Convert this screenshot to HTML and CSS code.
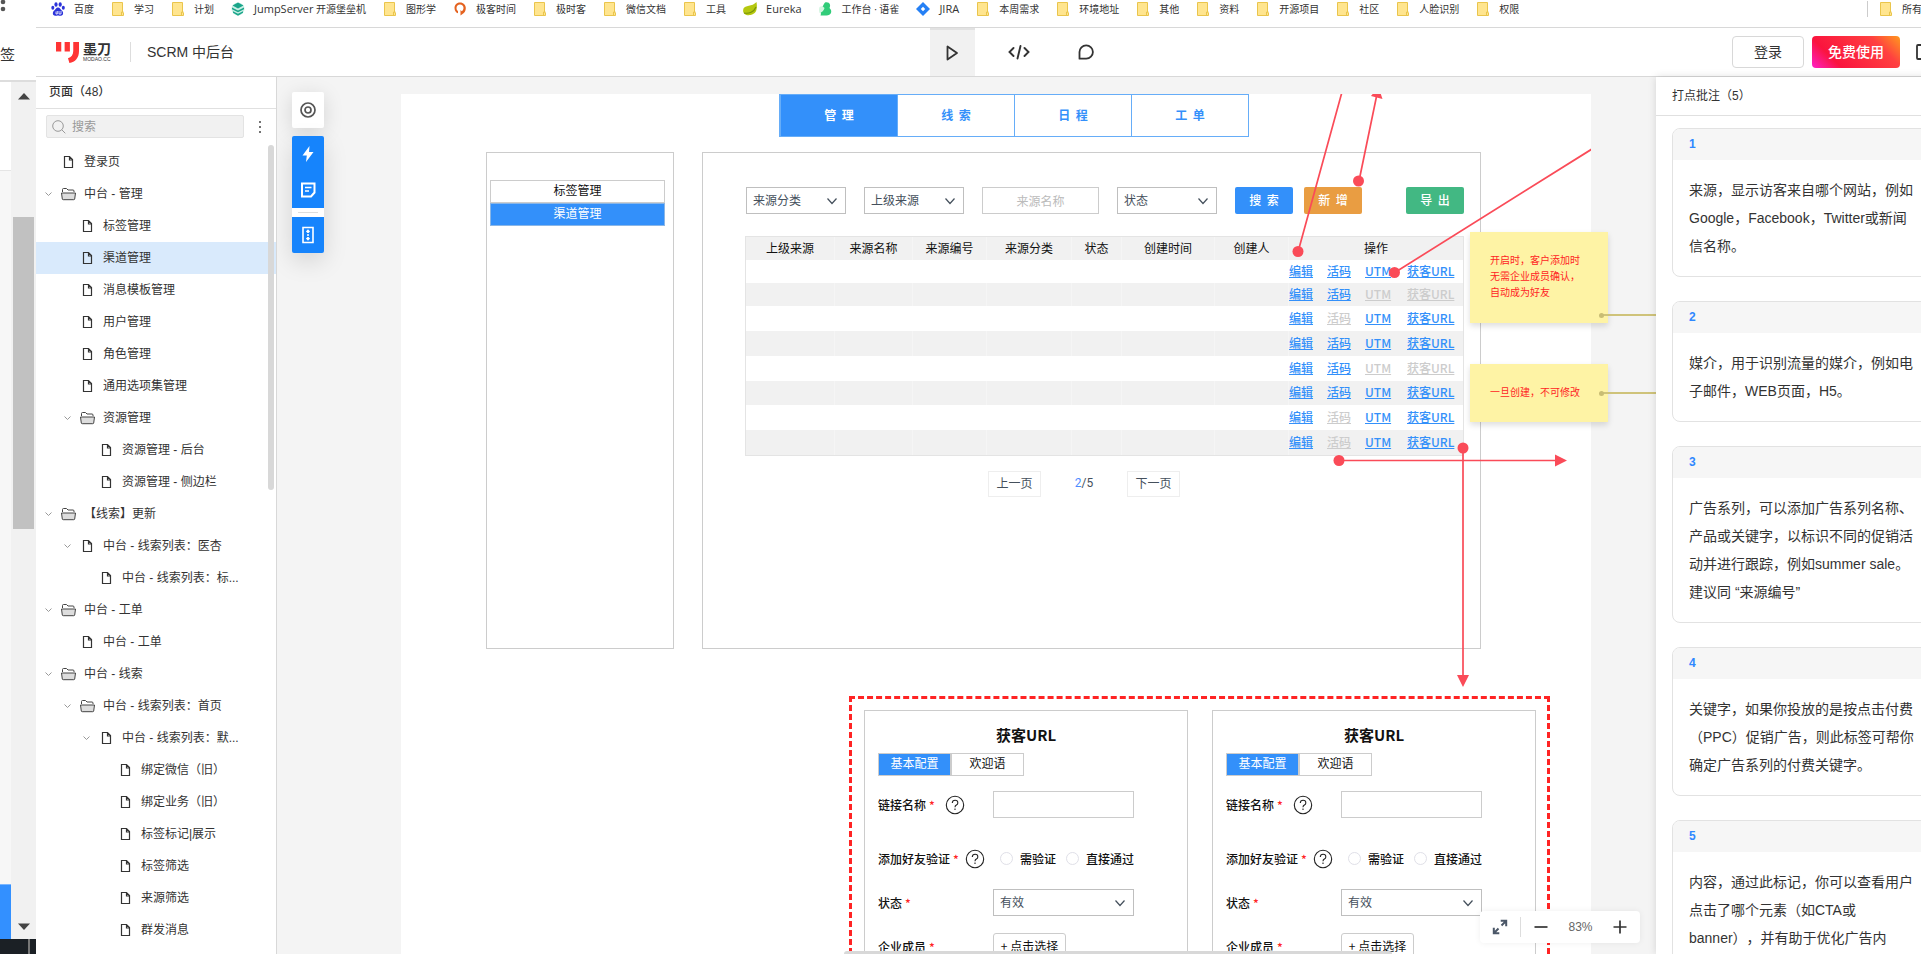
FILE: index.html
```html
<!DOCTYPE html>
<html lang="zh-CN">
<head>
<meta charset="utf-8">
<title>SCRM 中后台</title>
<link rel="stylesheet" href="styles.css">
</head>
<body>
<svg class="defs" aria-hidden="true">
  <symbol id="doc" viewBox="0 0 16 16"><path d="M4.500 2.500h5l3 3v8h-8zM9.500 2.500v3.500h3" fill="none" stroke="#333" stroke-width="1.200"/></symbol>
  <symbol id="folder" viewBox="0 0 16 16"><path d="M2.500 6V3.500q0-1 1-1h3l1.500 1.500h5q1 0 1 1v1" fill="none" stroke="#444"/><path d="M1.500 7h14l-.8 6q-.1.700-1 .7H3.300q-.9 0-1-.7z" fill="#ddd" stroke="#444"/></symbol>
  <symbol id="down" viewBox="0 0 16 16"><path d="M1.500 6.500l3 3 3-3" fill="none" stroke="#999"/></symbol>
  <symbol id="caret" viewBox="0 0 12 12"><path d="M1.500 3.500L6 8.500l4.500-5" fill="none" stroke="#45505c" stroke-width="1.200"/></symbol>
  <symbol id="mark" viewBox="0 0 14 16"><path d="M1.500 1.500h10v9.500l1 1v2.500h-11z" fill="#ffe58f" stroke="#eac54c"/><path d="M10.500 14v-3h2" fill="none" stroke="#eac54c"/></symbol>
  <symbol id="help" viewBox="0 0 20 20"><circle cx="10" cy="10" r="8.700" fill="none" stroke="#222" stroke-width="1.100"/><path d="M7.300 8q0-2.800 2.800-2.800T12.800 8q0 1.300-1.400 2.100T10 12.200M10 13.500v1.400" fill="none" stroke="#222" stroke-width="1.100"/></symbol>
</svg>
<div class="app">
  <aside class="gutter">
    <div class="gutter-head"><svg class="gutter-dots" viewBox="0 0 6 14"><circle cx="3" cy="2" r="2.300" fill="#555"/><circle cx="3" cy="9" r="2.300" fill="#555"/></svg><span>签</span></div>
    <div class="gutter-body">
      <div class="gutter-page"><div class="gutter-top"></div><div class="gutter-blue"></div></div>
      <div class="gutter-track">
        <svg viewBox="0 0 12 8"><path d="M0 7.500h12L6 1z" fill="#444"/></svg>
        <div class="gutter-thumb"></div>
        <svg viewBox="0 0 12 8"><path d="M0 .5h12L6 7z" fill="#444"/></svg>
      </div>
    </div>
    <div class="gutter-foot"></div>
  </aside>
  <div class="main">
    <nav class="bookmarks">
      <a href="#"><svg viewBox="0 0 14 14"><g fill="#2b32d9"><ellipse cx="5" cy="2.500" rx="1.600" ry="2.300"/><ellipse cx="9.200" cy="2.500" rx="1.600" ry="2.300"/><ellipse cx="1.800" cy="5.800" rx="1.500" ry="2"/><ellipse cx="12.300" cy="5.800" rx="1.500" ry="2"/><path d="M7 5.500c2 0 2.500 2 4 3.200s1.800 4.800-1.200 5c-1.500 0-1.800-.3-2.800-.3s-1.300.3-2.800.3c-3-.2-2.700-3.800-1.200-5S5 5.500 7 5.500z"/></g><path d="M5 9.500v2.500h1.300V9M8 9v3h2V9" fill="none" stroke="#fff" stroke-width=".8"/></svg>百度</a>
      <a href="#"><svg><use href="#mark"/></svg>学习</a>
      <a href="#"><svg><use href="#mark"/></svg>计划</a>
      <a href="#"><svg viewBox="0 0 14 14"><circle cx="7" cy="7" r="6.500" fill="#c9efe5"/><path d="M7 .5l5.500 3L7 6.500 1.500 3.500zM1 5.500l6 3 6-3v1.800l-6 3-6-3zM2 9.200l5 2.500 5-2.500v1.600L7 13.700l-5-2.900z" fill="#1aa58a"/></svg><span><span class="en">JumpServer</span> 开源堡垒机</span></a>
      <a href="#"><svg><use href="#mark"/></svg>图形学</a>
      <a href="#"><svg viewBox="0 0 14 14"><path d="M7 .5C3.500.5 1.500 3 1.500 6s1.700 4.800 3.500 5.300V9C4 8.500 3.500 7.500 3.500 6 3.500 4 5 2.600 7 2.600S10.500 4 10.500 6c0 1.500-.8 2.700-1.800 3.200L7.500 8v5.500l2-1.500c2-1 3.300-3 3.300-6C12.800 3 10.500.5 7 .5z" fill="#e4621f"/></svg>极客时间</a>
      <a href="#"><svg><use href="#mark"/></svg>极时客</a>
      <a href="#"><svg><use href="#mark"/></svg>微信文档</a>
      <a href="#"><svg><use href="#mark"/></svg>工具</a>
      <a href="#"><svg viewBox="0 0 14 14"><path d="M13.500 0c1 6 .5 12-6 13C2 13.800-1 11 .5 6.500 2 3 9 5 13.500 0z" fill="#b5c80f"/><path d="M1 11c5 1 10-1 12-6" fill="none" stroke="#77920a" stroke-width="1.200"/></svg><span class="en">Eureka</span></a>
      <a href="#"><svg viewBox="0 0 14 14"><path d="M6 .5c5-1 6 3 4.500 5.500C14 9 12 13.500 7.500 13.500H1.500C3 11 0 9 2.500 6 4.500 4 4.500 2 6 .5z" fill="#31cc79"/><path d="M.5 5q3-2 5 1-1 4-5 5-1-3 0-6z" fill="#d6f6e3"/></svg>工作台 · 语雀</a>
      <a href="#"><svg viewBox="0 0 14 14"><path d="M7 0l7 7-7 7-7-7z" fill="#2580f5"/><path d="M7 4.800L9.200 7 7 9.200 4.800 7z" fill="#fff"/></svg><span class="en">JIRA</span></a>
      <a href="#"><svg><use href="#mark"/></svg>本周需求</a>
      <a href="#"><svg><use href="#mark"/></svg>环境地址</a>
      <a href="#"><svg><use href="#mark"/></svg>其他</a>
      <a href="#"><svg><use href="#mark"/></svg>资料</a>
      <a href="#"><svg><use href="#mark"/></svg>开源项目</a>
      <a href="#"><svg><use href="#mark"/></svg>社区</a>
      <a href="#"><svg><use href="#mark"/></svg>人脸识别</a>
      <a href="#"><svg><use href="#mark"/></svg>权限</a>
      <a href="#" class="all"><svg><use href="#mark"/></svg>所有</a>
    </nav>
    <header class="topbar">
      <div class="brand">
        <svg class="logo" viewBox="0 0 24 23"><path d="M0 .5h5.500v10H0zM9 .5h5.500v10H9zM18 .5h6V10c0 7-4 12-10 12.500l-1.500-5C16 16.500 18 14 18 10z" fill="#ff3434"/></svg>
        <span class="logo-text"><b>墨刀</b><small>MODAO.CC</small></span>
        <h1>SCRM 中后台</h1>
      </div>
      <div class="modes">
        <button class="mode on" aria-label="预览"><svg viewBox="0 0 18 18"><path d="M4.500 2.500v13l9.500-6.500z" fill="none" stroke="#333" stroke-width="1.800" stroke-linejoin="round"/></svg></button>
        <button class="mode" aria-label="代码"><svg viewBox="0 0 24 18"><path d="M6.500 5L2.500 9l4 4M17.500 5l4 4-4 4M13.500 3l-3 12.500" fill="none" stroke="#333" stroke-width="1.900" stroke-linecap="round"/></svg></button>
        <button class="mode" aria-label="评论"><svg viewBox="0 0 18 18"><path d="M2.500 15.700V9A6.700 6.700 0 1 1 9.200 15.700z" fill="none" stroke="#333" stroke-width="1.800" stroke-linejoin="round"/></svg></button>
      </div>
      <div class="account">
        <button class="login">登录</button>
        <button class="free">免费使用</button>
        <svg class="frame" viewBox="0 0 16 16"><rect x="1" y="1" width="14" height="14" rx="1" fill="none" stroke="#333" stroke-width="1.800"/></svg>
      </div>
    </header>
    <div class="workspace">
      <aside class="pages">
        <h2>页面（48）</h2>
        <div class="find">
          <label><svg viewBox="0 0 14 14"><circle cx="6" cy="6" r="5.300" fill="none" stroke="#999"/><path d="M9.700 9.700l3.600 3.600" stroke="#999"/></svg><input type="text" placeholder="搜索" aria-label="搜索"></label>
          <button aria-label="更多"><svg viewBox="0 0 4 14"><g fill="#444"><circle cx="2" cy="2" r="1"/><circle cx="2" cy="7" r="1"/><circle cx="2" cy="12" r="1"/></g></svg></button>
        </div>
        <ul class="tree">
          <li><i></i><svg><use href="#doc"/></svg>登录页</li>
          <li><svg><use href="#down"/></svg><svg><use href="#folder"/></svg>中台 - 管理</li>
          <li class="l1"><i></i><svg><use href="#doc"/></svg>标签管理</li>
          <li class="l1 on"><i></i><svg><use href="#doc"/></svg>渠道管理</li>
          <li class="l1"><i></i><svg><use href="#doc"/></svg>消息模板管理</li>
          <li class="l1"><i></i><svg><use href="#doc"/></svg>用户管理</li>
          <li class="l1"><i></i><svg><use href="#doc"/></svg>角色管理</li>
          <li class="l1"><i></i><svg><use href="#doc"/></svg>通用选项集管理</li>
          <li class="l1"><svg><use href="#down"/></svg><svg><use href="#folder"/></svg>资源管理</li>
          <li class="l2"><i></i><svg><use href="#doc"/></svg>资源管理 - 后台</li>
          <li class="l2"><i></i><svg><use href="#doc"/></svg>资源管理 - 侧边栏</li>
          <li><svg><use href="#down"/></svg><svg><use href="#folder"/></svg>【线索】更新</li>
          <li class="l1"><svg><use href="#down"/></svg><svg><use href="#doc"/></svg>中台 - 线索列表：医杏</li>
          <li class="l2"><i></i><svg><use href="#doc"/></svg>中台 - 线索列表：标...</li>
          <li><svg><use href="#down"/></svg><svg><use href="#folder"/></svg>中台 - 工单</li>
          <li class="l1"><i></i><svg><use href="#doc"/></svg>中台 - 工单</li>
          <li><svg><use href="#down"/></svg><svg><use href="#folder"/></svg>中台 - 线索</li>
          <li class="l1"><svg><use href="#down"/></svg><svg><use href="#folder"/></svg>中台 - 线索列表：首页</li>
          <li class="l2"><svg><use href="#down"/></svg><svg><use href="#doc"/></svg>中台 - 线索列表：默...</li>
          <li class="l3"><i></i><svg><use href="#doc"/></svg>绑定微信（旧）</li>
          <li class="l3"><i></i><svg><use href="#doc"/></svg>绑定业务（旧）</li>
          <li class="l3"><i></i><svg><use href="#doc"/></svg>标签标记|展示</li>
          <li class="l3"><i></i><svg><use href="#doc"/></svg>标签筛选</li>
          <li class="l3"><i></i><svg><use href="#doc"/></svg>来源筛选</li>
          <li class="l3"><i></i><svg><use href="#doc"/></svg>群发消息</li>
        </ul>
        <div class="pages-bar"></div>
      </aside>
      <main class="stage">
        <div class="tools">
          <button class="plain" aria-label="聚焦"><svg viewBox="0 0 18 18"><g fill="none" stroke="#555" stroke-width="1.700"><circle cx="9" cy="9" r="7"/><circle cx="9" cy="9" r="3"/></g></svg></button>
          <div class="pack">
            <button aria-label="高亮"><svg viewBox="0 0 18 18"><path d="M10.500 1L3.500 10.500h4.300L7 17l7.500-10H10z" fill="#fff"/></svg></button>
            <button aria-label="便签"><svg viewBox="0 0 18 18"><path d="M3 2.500h12.500v9L12 15.500H3z" fill="none" stroke="#fff" stroke-width="2"/><path d="M6 6.500h6.500M6 10h4" stroke="#fff" stroke-width="1.500"/></svg></button>
            <hr>
            <button aria-label="长图"><svg viewBox="0 0 18 18"><path d="M4 1.500h10v15H4zM9 4.500v2.500M7.500 6L9 4.500 10.500 6M9 13.500V11M7.500 12L9 13.500l1.500-1.500M8 9h2" fill="none" stroke="#fff" stroke-width="1.600"/></svg></button>
          </div>
        </div>
        <section class="artboard">
          <nav class="tabs"><a href="#" class="on">管&nbsp;&nbsp;理</a><a href="#">线&nbsp;&nbsp;索</a><a href="#">日&nbsp;&nbsp;程</a><a href="#">工&nbsp;&nbsp;单</a></nav>
          <div class="frames">
            <nav class="menu"><a href="#">标签管理</a><a href="#" class="on">渠道管理</a></nav>
            <div class="content">
              <div class="filters">
                <span class="drop"><select aria-label="来源分类"><option>来源分类</option></select><svg><use href="#caret"/></svg></span>
                <span class="drop"><select aria-label="上级来源"><option>上级来源</option></select><svg><use href="#caret"/></svg></span>
                <input class="name" type="text" placeholder="来源名称" aria-label="来源名称">
                <span class="drop"><select aria-label="状态"><option>状态</option></select><svg><use href="#caret"/></svg></span>
                <div class="pair"><button class="btn blue">搜&nbsp;&nbsp;索</button><button class="btn orange">新&nbsp;&nbsp;增</button></div>
                <button class="btn green">导&nbsp;&nbsp;出</button>
              </div>
              <table>
                <colgroup><col class="c1"><col class="c2"><col class="c3"><col class="c4"><col class="c5"><col class="c6"><col class="c3"><col></colgroup>
                <thead><tr><th>上级来源</th><th>来源名称</th><th>来源编号</th><th>来源分类</th><th>状态</th><th>创建时间</th><th>创建人</th><th>操作</th></tr></thead>
                <tbody>
                  <tr class="short"><td></td><td></td><td></td><td></td><td></td><td></td><td></td><td><div class="ops"><a href="#">编辑</a><a href="#">活码</a><a href="#">UTM</a><a href="#">获客URL</a></div></td></tr>
                  <tr class="short"><td></td><td></td><td></td><td></td><td></td><td></td><td></td><td><div class="ops"><a href="#">编辑</a><a href="#">活码</a><a href="#" class="off">UTM</a><a href="#" class="off">获客URL</a></div></td></tr>
                  <tr><td></td><td></td><td></td><td></td><td></td><td></td><td></td><td><div class="ops"><a href="#">编辑</a><a href="#" class="off">活码</a><a href="#">UTM</a><a href="#">获客URL</a></div></td></tr>
                  <tr><td></td><td></td><td></td><td></td><td></td><td></td><td></td><td><div class="ops"><a href="#">编辑</a><a href="#">活码</a><a href="#">UTM</a><a href="#">获客URL</a></div></td></tr>
                  <tr><td></td><td></td><td></td><td></td><td></td><td></td><td></td><td><div class="ops"><a href="#">编辑</a><a href="#">活码</a><a href="#" class="off">UTM</a><a href="#" class="off">获客URL</a></div></td></tr>
                  <tr class="mid"><td></td><td></td><td></td><td></td><td></td><td></td><td></td><td><div class="ops"><a href="#">编辑</a><a href="#">活码</a><a href="#">UTM</a><a href="#">获客URL</a></div></td></tr>
                  <tr><td></td><td></td><td></td><td></td><td></td><td></td><td></td><td><div class="ops"><a href="#">编辑</a><a href="#" class="off">活码</a><a href="#">UTM</a><a href="#">获客URL</a></div></td></tr>
                  <tr><td></td><td></td><td></td><td></td><td></td><td></td><td></td><td><div class="ops"><a href="#">编辑</a><a href="#" class="off">活码</a><a href="#">UTM</a><a href="#">获客URL</a></div></td></tr>
                </tbody>
              </table>
              <div class="pager"><button>上一页</button><span><b>2</b>/5</span><button>下一页</button></div>
            </div>
          </div>
          <div class="flow">
            <form class="card">
              <h3>获客URL</h3>
              <div class="switch"><a href="#" class="on">基本配置</a><a href="#">欢迎语</a></div>
              <div class="row"><div class="lab"><label for="a1">链接名称</label><em>*</em><svg><use href="#help"/></svg></div><input id="a1" class="field" type="text"></div>
              <div class="row far"><div class="lab"><span>添加好友验证</span><em>*</em><svg><use href="#help"/></svg></div><label class="pick"><input type="radio" name="ra">需验证</label><label class="pick"><input type="radio" name="ra">直接通过</label></div>
              <div class="row"><div class="lab"><label for="a2">状态</label><em>*</em></div><span class="drop wide"><select id="a2"><option>有效</option></select><svg><use href="#caret"/></svg></span></div>
              <div class="row"><div class="lab"><span>企业成员</span><em>*</em></div><button type="button" class="choose">+ 点击选择</button></div>
            </form>
            <form class="card">
              <h3>获客URL</h3>
              <div class="switch"><a href="#" class="on">基本配置</a><a href="#">欢迎语</a></div>
              <div class="row"><div class="lab"><label for="b1">链接名称</label><em>*</em><svg><use href="#help"/></svg></div><input id="b1" class="field" type="text"></div>
              <div class="row far"><div class="lab"><span>添加好友验证</span><em>*</em><svg><use href="#help"/></svg></div><label class="pick"><input type="radio" name="rb">需验证</label><label class="pick"><input type="radio" name="rb">直接通过</label></div>
              <div class="row"><div class="lab"><label for="b2">状态</label><em>*</em></div><span class="drop wide"><select id="b2"><option>有效</option></select><svg><use href="#caret"/></svg></span></div>
              <div class="row"><div class="lab"><span>企业成员</span><em>*</em></div><button type="button" class="choose">+ 点击选择</button></div>
            </form>
          </div>
          <svg class="arrows" width="1191" height="640" viewBox="0 0 1191 640">
            <g stroke="#fa4b58" stroke-width="1.700" fill="none"><path d="M897 158L941 -2M958 87L976 0M993 179L1191 55M938 366.500h217M1062 354v230"/></g>
            <g fill="#fa4b58"><circle cx="897" cy="157.500" r="5.500"/><circle cx="957.500" cy="87" r="5.500"/><circle cx="993.500" cy="178.500" r="5.500"/><circle cx="938" cy="366.500" r="5.500"/><circle cx="1062" cy="354" r="5.500"/><path d="M1154 360.500v12l12-6zM1056 581h12l-6 12zM970 2l11.500 3-4-12z"/></g>
          </svg>
        </section>
        <div class="note n1">开启时，客户添加时<br>无需企业成员确认，<br>自动成为好友</div>
        <div class="note n2">一旦创建，不可修改</div>
        <div class="wire w1"></div>
        <div class="wire w2"></div>
        <div class="hbar"></div>
        <div class="zoom">
          <button aria-label="全屏"><svg viewBox="0 0 16 16"><path d="M9.500 6.500L14 2M6.500 9.500L2 14M8.700 1.800H14.200V7.300M1.800 8.700V14.200H7.300" fill="none" stroke="#4b5768" stroke-width="2"/></svg></button>
          <span class="bar"></span>
          <button aria-label="缩小"><svg viewBox="0 0 16 16"><path d="M1.500 8h13" stroke="#333" stroke-width="1.700"/></svg></button>
          <output>83%</output>
          <button aria-label="放大"><svg viewBox="0 0 16 16"><path d="M1.500 8h13M8 1.500v13" stroke="#333" stroke-width="1.700"/></svg></button>
        </div>
      </main>
      <aside class="remarks">
        <h2>打点批注（5）</h2>
        <article><h3>1</h3><p>来源，显示访客来自哪个网站，例如Google，Facebook，Twitter或新闻信名称。</p></article>
        <article><h3>2</h3><p>媒介，用于识别流量的媒介，例如电子邮件，WEB页面，H5。</p></article>
        <article><h3>3</h3><p>广告系列，可以添加广告系列名称、产品或关键字，以标识不同的促销活动并进行跟踪，例如summer sale。建议同 “来源编号”</p></article>
        <article><h3>4</h3><p>关键字，如果你投放的是按点击付费（PPC）促销广告，则此标签可帮你确定广告系列的付费关键字。</p></article>
        <article><h3>5</h3><p>内容，通过此标记，你可以查看用户点击了哪个元素（如CTA或banner），并有助于优化广告内</p></article>
      </aside>
    </div>
  </div>
</div>
</body>
</html>
```
FILE: styles.css
```css
* { box-sizing: border-box; }
body { margin: 0; overflow: hidden; background: #fff; color: #333; font: 12px/16px "Liberation Sans", "Noto Sans CJK SC", sans-serif; text-spacing-trim: space-all; }
h1, h2, h3, p, ul { margin: 0; padding: 0; font-weight: 400; }
a { color: inherit; text-decoration: none; }
button, input, select { font: inherit; color: inherit; margin: 0; }
button { padding: 0; border: 0; background: none; }
svg { display: block; flex: none; }
.defs { position: absolute; width: 0; height: 0; }

.app { display: flex; height: 100vh; }

/* Strip of the window behind */
.gutter { flex: none; width: 36px; display: flex; flex-direction: column; }
.gutter-head { height: 82px; border-bottom: 2px solid #ddd; overflow: hidden; font-size: 15px; line-height: 18px; }
.gutter-dots { width: 6px; height: 14px; margin-bottom: 32px; }
.gutter-body { flex: 1; display: flex; }
.gutter-page { width: 11px; display: flex; flex-direction: column; background: #f7f7f7; }
.gutter-top { height: 89px; background: #fff; border-bottom: 1px solid #e5e5e5; }
.gutter-blue { margin-top: auto; height: 55px; background: #3390ff; border-top: 1px solid #7ab6ff; }
.gutter-track { flex: 1; display: flex; flex-direction: column; align-items: center; padding: 10px 0 8px; background: #f1f1f1; }
.gutter-track svg { width: 12px; height: 8px; }
.gutter-thumb { width: 21px; height: 312px; margin: 117px 0 auto; background: #c1c1c1; }
.gutter-foot { height: 15px; background: linear-gradient(90deg, #1b2025 28px, #777 28px, #777 30px, #1b2025 30px); }

.main { flex: 1; min-width: 0; display: flex; flex-direction: column; }

.bookmarks { display: flex; gap: 17px; height: 28px; padding: 1px 0 10px 15px; border-bottom: 1px solid #d8d8d8; font: 10px/16px "Open Sans", "Noto Sans CJK SC", sans-serif; white-space: nowrap; overflow: hidden; }
.bookmarks a { display: flex; gap: 9px; align-items: center; flex: none; }
.bookmarks svg { width: 14px; height: 16px; }
.bookmarks .en { font-size: 11px; }
.bookmarks .all { margin-left: auto; margin-right: -1px; padding-left: 11px; border-left: 1px solid #ccc; }

.topbar { display: grid; grid-template-columns: 1fr auto 1fr; height: 49px; border-bottom: 1px solid #d8d8d8; font-size: 14px; }
.brand { display: flex; align-items: center; padding-left: 20px; }
.logo { width: 23px; height: 23px; margin-right: 4px; }
.logo-text { display: flex; flex-direction: column; padding-right: 19px; border-right: 1px solid #ddd; }
.logo-text b { font-size: 14px; line-height: 14px; }
.logo-text small { font-size: 5px; line-height: 6px; }
.brand h1 { margin-left: 16px; font-size: 14px; line-height: 20px; }
.modes { display: flex; gap: 22px; padding-left: 81px; }
.mode { width: 45px; display: flex; align-items: center; justify-content: center; }
.mode svg { height: 18px; width: 24px; }
.mode.on { background: #f1f1f1; border-top: 2px solid #e2e2e2; }
.account { display: flex; justify-content: flex-end; align-items: center; gap: 8px; margin-right: -11px; }
.login { width: 72px; height: 32px; border: 1px solid #d8d8d8; border-radius: 4px; }
.free { width: 88px; height: 32px; border-radius: 4px; color: #fff; font-weight: 500; background: linear-gradient(45deg, #ff20c8 0%, #fa143e 25%, #ff4040 75%, #ff9a1e 100%); }
.frame { width: 16px; height: 16px; margin-left: 8px; }

.workspace { flex: 1; min-height: 0; display: flex; }

.pages { flex: none; position: relative; width: 241px; border-right: 1px solid #d8d8d8; overflow: hidden; }
.pages h2 { height: 32px; padding: 7px 13px; border-bottom: 1px solid #e0e0e0; font-size: 12px; line-height: 16px; font-weight: 500; }
.find { display: flex; gap: 14px; align-items: center; padding: 6px 10px 8px; }
.find label { flex: none; display: flex; align-items: center; gap: 6px; width: 198px; height: 23px; padding: 0 5px; background: #f1f1f1; border: 1px solid #e3e3e3; border-radius: 2px; }
.find label svg { width: 14px; height: 14px; }
.find input { flex: 1; min-width: 0; border: 0; padding: 0; background: none; }
.find input::placeholder { color: #999; }
.find button svg { width: 4px; height: 14px; }
.tree { list-style: none; }
.tree li { display: flex; align-items: center; height: 32px; padding-left: 8px; white-space: pre; }
.tree svg, .tree i { width: 16px; height: 16px; flex: none; }
.tree svg:nth-child(2) { margin-right: 8px; }
.tree .l1 { padding-left: 27px; }
.tree .l2 { padding-left: 46px; }
.tree .l3 { padding-left: 65px; }
.tree .on { background: #d9eafc; }
.pages-bar { position: absolute; right: 2px; top: 68px; width: 6px; height: 345px; border-radius: 3px; background: #d8d8d8; }

.stage { flex: 1; min-width: 0; position: relative; display: flex; padding: 17px 65px 0 124px; background: #f4f4f4; overflow: hidden; }
.tools { position: absolute; left: 15px; top: 15px; display: flex; flex-direction: column; gap: 8px; }
.tools button { display: flex; width: 32px; height: 36px; align-items: center; justify-content: center; }
.tools svg { width: 18px; height: 18px; }
.plain { background: #fff; border-radius: 2px; box-shadow: 0 4px 20px #0002; }
.pack { background: #1684fc; border-radius: 2px; box-shadow: 0 8px 24px #0002; }
.pack hr { margin: 0; height: 9px; border: 4px solid #fff; border-width: 4px 6px; background: #ddd; }

/* Artboard */
.artboard { flex: 1; min-width: 0; position: relative; display: flex; flex-direction: column; background: #fff; overflow: hidden; font-family: "Noto Sans CJK SC", sans-serif; }
.arrows { position: absolute; left: 0; top: 0; pointer-events: none; }
.tabs { flex: none; display: grid; grid-template-columns: repeat(4, 1fr); width: 470px; height: 43px; margin: 0 0 15px 378px; border: 1px solid #66adf8; }
.tabs a { display: flex; justify-content: center; padding-top: 12px; border-left: 1px solid #66adf8; color: #3390fa; font-weight: 700; }
.tabs .on { background: #3390fa; color: #fff; }
.frames { flex: none; display: grid; grid-template-columns: 188px 779px; gap: 28px; min-height: 497px; margin: 0 0 47px 85px; }
.menu { border: 1px solid #ccc; padding: 27px 8px 0 3px; }
.menu a { display: block; height: 23px; border: 1px solid #ccc; text-align: center; line-height: 18px; color: #111; }
.menu .on { background: #3390fa; border-color: #8ab6e6; color: #fff; }
.content { border: 1px solid #ccc; padding: 34px 16px 0 42px; }
.filters { display: flex; gap: 18px; padding-left: 1px; color: #45505c; }
.drop { position: relative; width: 100px; height: 27px; }
.drop select { appearance: none; width: 100%; height: 100%; padding: 0 6px 2px; border: 1px solid #bfbfbf; border-radius: 0; background: #fff; color: #45505c; }
.drop svg { position: absolute; right: 8px; top: 8px; width: 12px; height: 12px; pointer-events: none; }
.name { width: 117px; height: 27px; padding-bottom: 2px; border: 1px solid #ccc; text-align: center; }
.name::placeholder { color: #bbb; }
.pair { display: flex; gap: 11px; }
.btn { width: 58px; height: 27px; border-radius: 2px; color: #fff; font-weight: 500; padding-bottom: 2px; }
.blue { background: #3390fa; }
.orange { background: #e99d42; }
.green { background: #42b883; margin-left: auto; }
table { width: 100%; margin-top: 22px; table-layout: fixed; border-collapse: separate; border-spacing: 0; border: 1px solid #e4e4e4; }
.c1 { width: 88px; } .c2 { width: 78px; } .c3 { width: 74px; } .c4 { width: 85px; } .c5 { width: 50px; } .c6 { width: 93px; }
th, td { padding: 0 0 2px; height: 25px; }
th { height: 23px; background: #f1f1f1; color: #111; font-weight: 400; line-height: 16px; }
.short td { height: 23px; }
.mid td { height: 24px; }
th + th, td + td { border-left: 1px solid #f5f5f5; }
tr:nth-child(odd) td + td { border-color: #fff; }
tr:nth-child(even) td { background: #f1f1f1; }
.ops { display: grid; grid-template-columns: 38px 38px 42px auto; color: #3390fa; font-weight: 500; line-height: 16px; }
.ops a { text-decoration: underline; }
.ops .off { color: #ccc; }
.pager { display: flex; margin: 15px 0 0 243px; color: #45505c; }
.pager button { width: 53px; height: 26px; padding-bottom: 3px; border: 1px solid #eee; }
.pager span { width: 86px; text-align: center; line-height: 24px; font-family: Roboto, sans-serif; }
.pager b { color: #4d8bff; font-weight: 400; }
.flow { flex: 1; min-height: 0; display: flex; gap: 24px; width: 701px; margin-left: 448px; padding: 11px 12px 0; border: 3px dashed #ff2424; border-bottom: 0; overflow: hidden; color: #111; }
.card { flex: none; width: 324px; padding: 12px 13px 0; border: 1px solid #ccc; border-bottom: 0; }
.card h3 { font-size: 15px; line-height: 24px; font-weight: 700; text-align: center; margin-bottom: 6px; }
.switch { display: flex; margin-bottom: 15px; }
.switch a { width: 73px; height: 23px; border: 1px solid #ccc; text-align: center; line-height: 18px; }
.switch .on { background: #3390fa; color: #fff; }
.row { display: flex; align-items: center; height: 27px; margin-bottom: 17px; font-weight: 500; white-space: nowrap; }
.row:nth-of-type(2) { margin-bottom: 27px; }
.lab { flex: none; display: flex; align-items: center; width: 115px; }
.lab em { margin-left: 3px; color: #ff2424; font-style: normal; }
.lab svg { width: 20px; height: 20px; margin-left: 10px; }
.far .lab svg { margin-left: 6px; }
.field { width: 141px; height: 27px; border: 1px solid #ccc; }
.wide { width: 141px; font-weight: 400; }
.pick { display: flex; align-items: center; gap: 7px; margin-left: 7px; }
.pick + .pick { margin-left: 10px; }
.pick input { appearance: none; width: 13px; height: 13px; border: 1px solid #e0e0e8; border-radius: 50%; }
.choose { width: 73px; height: 27px; padding-bottom: 2px; border: 1px solid #ccc; border-radius: 3px; font-weight: 400; }

/* Things pinned over the canvas */
.note { position: absolute; left: 1193px; width: 138px; padding: 20px 0 0 20px; background: #fef3a5; box-shadow: 0 3px 6px #0002; color: #ff2424; font: 10px/16px "Noto Sans CJK SC", sans-serif; }
.n1 { top: 155px; height: 91px; }
.n2 { top: 287px; height: 58px; }
.wire { position: absolute; left: 1324px; right: 0; height: 2px; background: #cfc37a; }
.wire::before { content: ""; position: absolute; left: -2px; top: -1px; width: 5px; height: 5px; border-radius: 50%; background: #c9bd74; }
.w1 { top: 237px; }
.w2 { top: 315px; }
.hbar { position: absolute; left: 567px; bottom: 0; width: 548px; height: 3px; border-radius: 3px 3px 0 0; background: #d8d8d8; }
.zoom { position: absolute; right: 16px; bottom: 11px; display: flex; align-items: center; width: 160px; height: 32px; padding: 0 12px; background: #fff; border-radius: 4px; box-shadow: 0 0 6px #0001; color: #666; }
.zoom svg { width: 16px; height: 16px; }
.zoom .bar { width: 1px; height: 20px; margin: 0 12px; background: #ddd; }
.zoom output { flex: 1; text-align: center; }

.remarks { flex: none; position: relative; width: 292px; margin-right: -27px; background: #fff; box-shadow: 0 0 8px #0002; }
.remarks h2 { height: 39px; margin-bottom: 12px; padding: 11px 16px; border-bottom: 1px solid #e0e0e0; font-size: 12px; line-height: 16px; }
.remarks article { margin: 0 16px 24px; border: 1px solid #e2e2e2; border-radius: 8px; overflow: hidden; }
.remarks h3 { height: 31px; padding: 0 16px; background: #f6f6f6; color: #2f88ff; font-size: 12px; line-height: 31px; font-weight: 700; }
.remarks p { padding: 16px; font-size: 14px; line-height: 28px; }
```
